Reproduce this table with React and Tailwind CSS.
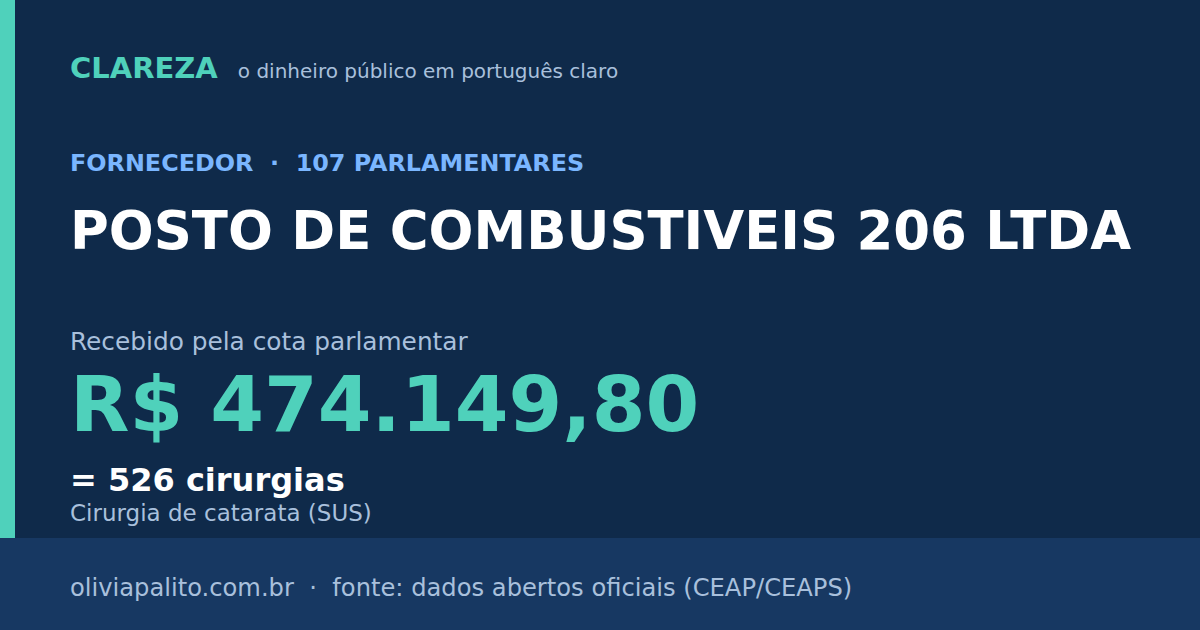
export default function App() {
  return (
    <div className="w-[1200px] h-[630px] flex flex-col bg-[#0f2a4a] overflow-hidden" style={{ fontFamily: '"DejaVu Sans", sans-serif' }}>
      <div className="flex flex-1 min-h-0">
        <div className="w-[15px] bg-[#4fd1bb] shrink-0" />
        <div className="flex flex-col pl-[55px] pt-[54px]">
          <div className="flex items-baseline gap-[20px]">
            <span className="text-[29px] font-bold text-[#4fd1bb] leading-none">CLAREZA</span>
            <span className="text-[20px] text-[#a9c0dc] leading-none">o dinheiro público em português claro</span>
          </div>
          <div className="mt-[69px] text-[23.85px] font-bold text-[#7ab6ff] leading-none whitespace-pre">FORNECEDOR  ·  107 PARLAMENTARES</div>
          <div className="mt-[29px] text-[52.9px] font-bold text-white leading-none whitespace-nowrap">POSTO DE COMBUSTIVEIS 206 LTDA</div>
          <div className="mt-[72px] text-[24.8px] text-[#a9c0dc] leading-none">Recebido pela cota parlamentar</div>
          <div className="mt-[11px] text-[77.3px] font-bold text-[#4fd1bb] leading-none">R$ 474.149,80</div>
          <div className="mt-[21px] text-[32px] font-bold text-white leading-none">= 526 cirurgias</div>
          <div className="mt-[6px] text-[23px] text-[#a9c0dc] leading-none">Cirurgia de catarata (SUS)</div>
        </div>
      </div>
      <div className="h-[92px] shrink-0 bg-[#173862] flex items-start pt-[38px] pl-[70px]">
        <span className="text-[24.2px] text-[#a9c0dc] leading-none whitespace-pre">oliviapalito.com.br  ·  fonte: dados abertos oficiais (CEAP/CEAPS)</span>
      </div>
    </div>
  );
}
